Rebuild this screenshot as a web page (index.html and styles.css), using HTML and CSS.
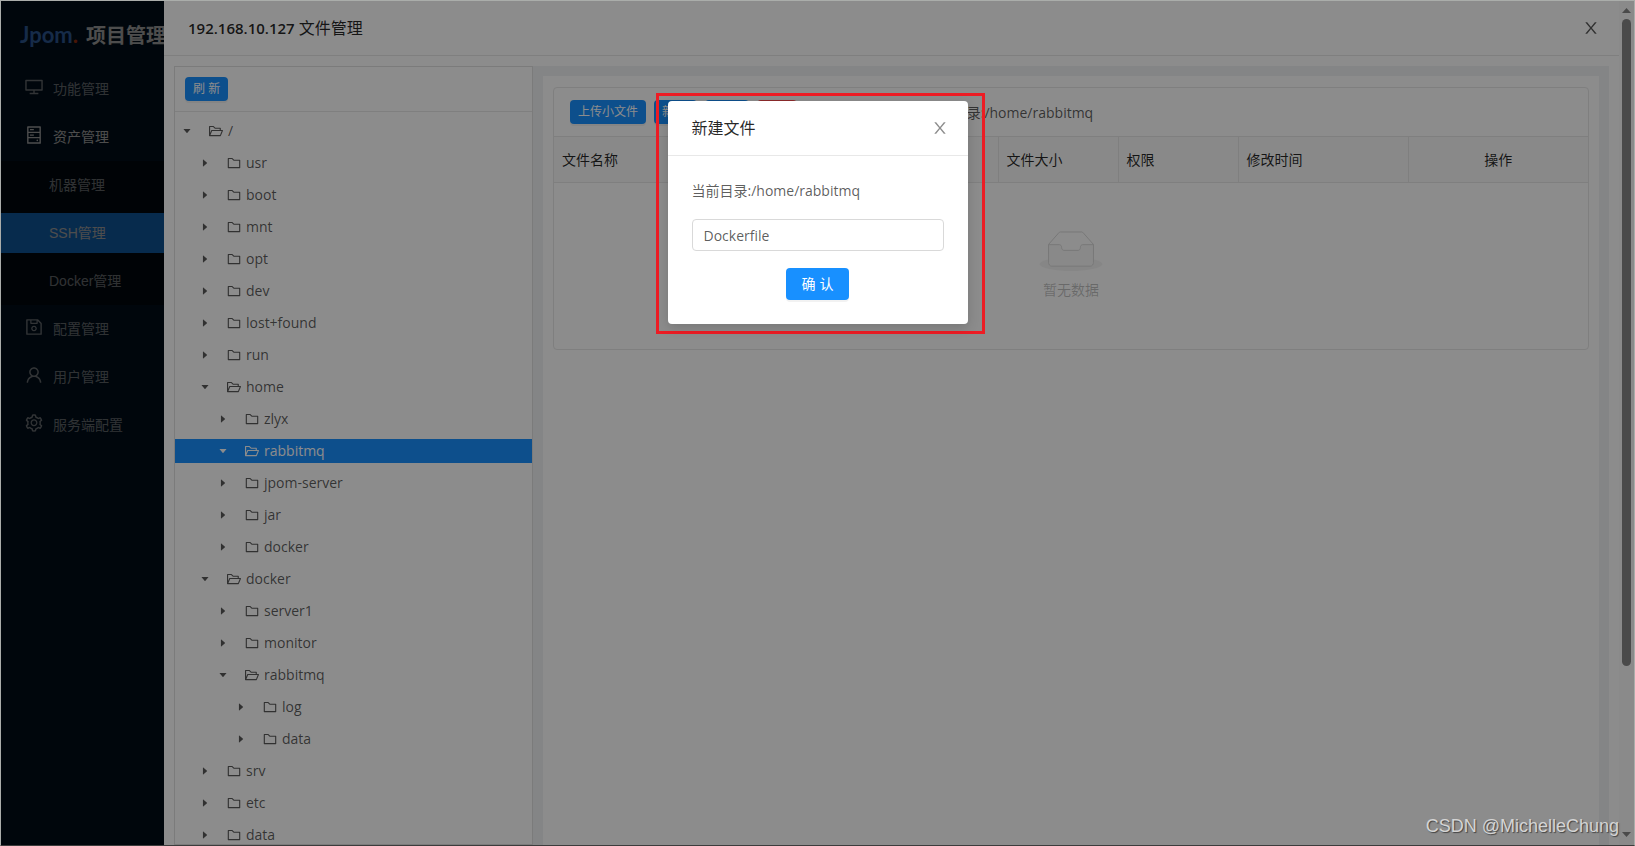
FILE: index.html
```html
<!DOCTYPE html>
<html lang="zh-CN">
<head>
<meta charset="utf-8">
<title>192.168.10.127 文件管理</title>
<link rel="stylesheet" href="styles.css">
</head>
<body>
<svg class="defs" aria-hidden="true">
  <symbol id="close" viewBox="0 0 1024 1024"><path d="M563.8 512l262.5-312.9c4.4-5.2.7-13.1-6.1-13.1h-79.8c-4.7 0-9.2 2.1-12.3 5.7L511.6 449.8 295.1 191.7c-3-3.6-7.5-5.7-12.3-5.7H203c-6.8 0-10.5 7.9-6.1 13.1L459.4 512 196.9 824.9A7.95 7.95 0 0 0 203 838h79.8c4.7 0 9.2-2.1 12.3-5.7l216.5-258.1 216.5 258.1c3 3.6 7.5 5.7 12.3 5.7h79.8c6.8 0 10.5-7.9 6.1-13.1L563.8 512z"/></symbol>
  <symbol id="folder" viewBox="0 0 1024 1024"><path d="M880 298.4H521L403.7 186.2a8.15 8.15 0 0 0-5.5-2.2H144c-17.7 0-32 14.3-32 32v592c0 17.7 14.3 32 32 32h736c17.7 0 32-14.3 32-32V330.4c0-17.7-14.3-32-32-32zM840 768H184V256h188.5l119.6 114.4H840V768z"/></symbol>
  <symbol id="open" viewBox="0 0 1024 1024"><path d="M928 444H820V330.4c0-17.7-14.3-32-32-32H473L355.7 186.2a8.15 8.15 0 0 0-5.5-2.2H96c-17.7 0-32 14.3-32 32v592c0 17.7 14.3 32 32 32h698c13 0 24.8-7.9 29.7-20l134-332c1.5-3.8 2.3-7.9 2.3-12 0-17.7-14.3-32-32-32zM136 256h188.5l119.6 114.4H748V444H238c-13 0-24.8 7.9-29.7 20L136 643.2V256zm635.3 512H159l103.3-256h612.4L771.3 768z"/></symbol>
  <symbol id="down" viewBox="0 0 1024 1024"><path d="M840.4 300H183.6c-19.7 0-30.7 20.8-18.5 35l328.4 380.8c9.4 10.9 27.5 10.9 37 0L858.9 335c12.2-14.2 1.2-35-18.5-35z"/></symbol>
  <symbol id="right" viewBox="0 0 1024 1024"><path d="M300 183.600v656.800c0 19.700 20.800 30.700 35 18.500l380.800-328.400c10.900-9.400 10.900-27.500 0-37L335 165.100c-14.200-12.200-35-1.200-35 18.500z"/></symbol>
  <symbol id="desktop" viewBox="0 0 1024 1024"><path d="M928 140H96c-17.7 0-32 14.3-32 32v496c0 17.7 14.3 32 32 32h380v112H304c-8.8 0-16 7.2-16 16v48c0 4.4 3.6 8 8 8h432c4.4 0 8-3.6 8-8v-48c0-8.8-7.2-16-16-16H548V700h380c17.7 0 32-14.3 32-32V172c0-17.7-14.3-32-32-32zm-40 488H136V212h752v416z"/></symbol>
  <symbol id="hdd" viewBox="0 0 1024 1024"><path d="M832 64H192c-17.7 0-32 14.3-32 32v832c0 17.7 14.3 32 32 32h640c17.7 0 32-14.3 32-32V96c0-17.7-14.3-32-32-32zm-600 72h560v208H232V136zm560 480H232V408h560v208zm0 272H232V680h560v208zM496 208H312c-4.4 0-8 3.6-8 8v48c0 4.4 3.6 8 8 8h184c4.4 0 8-3.6 8-8v-48c0-4.4-3.6-8-8-8zM312 544h184c4.4 0 8-3.6 8-8v-48c0-4.4-3.6-8-8-8H312c-4.4 0-8 3.6-8 8v48c0 4.4 3.6 8 8 8zm328 244a40 40 0 1 0 80 0 40 40 0 1 0-80 0z"/></symbol>
  <symbol id="save" viewBox="0 0 1024 1024"><path d="M893.3 293.3L730.7 130.7c-7.5-7.5-16.7-13-26.7-16V112H144c-17.7 0-32 14.3-32 32v736c0 17.7 14.3 32 32 32h736c17.7 0 32-14.3 32-32V338.5c0-17-6.7-33.2-18.7-45.2zM384 184h256v104H384V184zm456 656H184V184h136v136c0 17.7 14.3 32 32 32h320c17.7 0 32-14.3 32-32V205.8l136 136V840zM512 442c-79.5 0-144 64.5-144 144s64.5 144 144 144 144-64.5 144-144-64.5-144-144-144zm0 224c-44.2 0-80-35.8-80-80s35.8-80 80-80 80 35.8 80 80-35.8 80-80 80z"/></symbol>
  <symbol id="user" viewBox="0 0 1024 1024"><path d="M858.5 763.6a374 374 0 0 0-80.6-119.5 375.63 375.63 0 0 0-119.5-80.6c-.4-.2-.8-.3-1.2-.5C719.5 518 760 444.7 760 362c0-137-111-248-248-248S264 225 264 362c0 82.7 40.5 156 102.8 201.1-.4.2-.8.3-1.2.5-44.8 18.9-85 46-119.5 80.6a375.63 375.63 0 0 0-80.6 119.5A371.7 371.7 0 0 0 136 901.8a8 8 0 0 0 8 8.2h60c4.400 0 7.900-3.500 8-7.800 2-77.200 33-149.500 87.800-204.300 56.700-56.700 132-87.900 212.200-87.900s155.500 31.200 212.200 87.900C779 752.700 810 825 812 902.200c.1 4.400 3.600 7.800 8 7.800h60a8 8 0 0 0 8-8.200c-1-47.800-10.900-94.300-29.500-138.200zM512 534c-45.900 0-89.100-17.900-121.600-50.400S340 407.900 340 362c0-45.900 17.900-89.100 50.400-121.600S466.100 190 512 190s89.100 17.900 121.600 50.400S684 316.100 684 362c0 45.900-17.900 89.100-50.400 121.600S557.900 534 512 534z"/></symbol>
  <symbol id="setting" viewBox="0 0 1024 1024"><path d="M924.8 625.7l-65.5-56c3.1-19 4.7-38.4 4.7-57.8s-1.6-38.8-4.7-57.8l65.5-56a32.03 32.03 0 0 0 9.3-35.2l-.9-2.6a443.74 443.74 0 0 0-79.7-137.9l-1.8-2.1a32.12 32.12 0 0 0-35.1-9.5l-81.3 28.9c-30-24.6-63.5-44-99.7-57.6l-15.7-85a32.05 32.05 0 0 0-25.8-25.7l-2.7-.5c-52.1-9.4-106.9-9.4-159 0l-2.7.5a32.05 32.05 0 0 0-25.8 25.7l-15.8 85.4a351.86 351.86 0 0 0-99 57.4l-81.9-29.1a32 32 0 0 0-35.1 9.5l-1.8 2.1a446.02 446.02 0 0 0-79.7 137.9l-.9 2.6c-4.5 12.5-.8 26.5 9.3 35.2l66.3 56.6c-3.1 18.8-4.6 38-4.6 57.1 0 19.2 1.5 38.4 4.6 57.1L99 625.5a32.03 32.03 0 0 0-9.3 35.2l.9 2.6c18.1 50.4 44.9 96.9 79.7 137.9l1.8 2.1a32.12 32.12 0 0 0 35.1 9.5l81.9-29.1c29.8 24.5 63.1 43.9 99 57.4l15.8 85.4a32.05 32.05 0 0 0 25.8 25.7l2.7.5a449.4 449.4 0 0 0 159 0l2.7-.5a32.05 32.05 0 0 0 25.8-25.7l15.7-85a350 350 0 0 0 99.7-57.6l81.3 28.9a32 32 0 0 0 35.1-9.5l1.8-2.1c34.8-41.1 61.6-87.5 79.7-137.9l.9-2.6c4.5-12.3.8-26.3-9.3-35zM788.3 465.9c2.5 15.1 3.8 30.6 3.8 46.1s-1.3 31-3.8 46.1l-6.6 40.1 74.7 63.9a370.03 370.03 0 0 1-42.6 73.6L721 702.8l-31.4 25.8c-23.9 19.6-50.5 35-79.3 45.8l-38.1 14.3-17.9 97a377.5 377.5 0 0 1-85 0l-17.9-97.2-37.8-14.5c-28.500-10.800-55-26.200-78.700-45.700l-31.400-25.900-93.400 33.200c-17-22.900-31.200-47.600-42.600-73.600l75.500-64.500-6.500-40c-2.400-14.900-3.700-30.300-3.700-45.500 0-15.300 1.200-30.600 3.700-45.500l6.500-40-75.500-64.500c11.300-26.100 25.600-50.700 42.600-73.600l93.400 33.200 31.400-25.900c23.700-19.500 50.200-34.900 78.700-45.700l37.900-14.300 17.900-97.200c28.100-3.200 56.800-3.200 85 0l17.900 97 38.100 14.300c28.700 10.800 55.400 26.200 79.300 45.800l31.400 25.800 92.800-32.900c17 22.900 31.200 47.600 42.600 73.600L781.800 426l6.500 39.900zM512 326c-97.200 0-176 78.800-176 176s78.800 176 176 176 176-78.800 176-176-78.800-176-176-176zm79.200 255.200A111.600 111.600 0 0 1 512 614c-29.900 0-58-11.700-79.200-32.800A111.600 111.600 0 0 1 400 502c0-29.900 11.700-58 32.800-79.200C454 401.600 482.100 390 512 390c29.900 0 58 11.600 79.200 32.800A111.600 111.600 0 0 1 624 502c0 29.900-11.700 58-32.800 79.200z"/></symbol>
</svg>

<div class="app">
  <aside class="sider">
    <div class="brand"><span class="logo">Jpom<span class="logo-dot">.</span></span><span class="brand-name">项目管理</span></div>
    <nav class="menu">
      <a class="menu-item" href="#"><svg class="menu-icon"><use href="#desktop"/></svg>功能管理</a>
      <a class="menu-item current" href="#"><svg class="menu-icon"><use href="#hdd"/></svg>资产管理</a>
      <div class="submenu">
        <a class="sub-item" href="#">机器管理</a>
        <a class="sub-item active" href="#">SSH管理</a>
        <a class="sub-item" href="#">Docker管理</a>
      </div>
      <a class="menu-item" href="#"><svg class="menu-icon"><use href="#save"/></svg>配置管理</a>
      <a class="menu-item" href="#"><svg class="menu-icon"><use href="#user"/></svg>用户管理</a>
      <a class="menu-item" href="#"><svg class="menu-icon"><use href="#setting"/></svg>服务端配置</a>
    </nav>
  </aside>

  <section class="drawer">
    <div class="drawer-main">
      <header class="drawer-head">
        <h1 class="drawer-title"><span class="host">192.168.10.127</span> 文件管理</h1>
        <button class="icon-btn" aria-label="关闭"><svg class="close-icon"><use href="#close"/></svg></button>
      </header>
      <div class="drawer-body">
        <div class="tree-card">
          <div class="tree-head"><button class="btn small">刷 新</button></div>
          <ul class="tree">
            <li class="node l0"><svg class="caret"><use href="#down"/></svg><svg class="folder"><use href="#open"/></svg>/</li>
            <li class="node l1"><svg class="caret"><use href="#right"/></svg><svg class="folder"><use href="#folder"/></svg>usr</li>
            <li class="node l1"><svg class="caret"><use href="#right"/></svg><svg class="folder"><use href="#folder"/></svg>boot</li>
            <li class="node l1"><svg class="caret"><use href="#right"/></svg><svg class="folder"><use href="#folder"/></svg>mnt</li>
            <li class="node l1"><svg class="caret"><use href="#right"/></svg><svg class="folder"><use href="#folder"/></svg>opt</li>
            <li class="node l1"><svg class="caret"><use href="#right"/></svg><svg class="folder"><use href="#folder"/></svg>dev</li>
            <li class="node l1"><svg class="caret"><use href="#right"/></svg><svg class="folder"><use href="#folder"/></svg>lost+found</li>
            <li class="node l1"><svg class="caret"><use href="#right"/></svg><svg class="folder"><use href="#folder"/></svg>run</li>
            <li class="node l1"><svg class="caret"><use href="#down"/></svg><svg class="folder"><use href="#open"/></svg>home</li>
            <li class="node l2"><svg class="caret"><use href="#right"/></svg><svg class="folder"><use href="#folder"/></svg>zlyx</li>
            <li class="node l2 selected"><svg class="caret"><use href="#down"/></svg><svg class="folder"><use href="#open"/></svg>rabbitmq</li>
            <li class="node l2"><svg class="caret"><use href="#right"/></svg><svg class="folder"><use href="#folder"/></svg>jpom-server</li>
            <li class="node l2"><svg class="caret"><use href="#right"/></svg><svg class="folder"><use href="#folder"/></svg>jar</li>
            <li class="node l2"><svg class="caret"><use href="#right"/></svg><svg class="folder"><use href="#folder"/></svg>docker</li>
            <li class="node l1"><svg class="caret"><use href="#down"/></svg><svg class="folder"><use href="#open"/></svg>docker</li>
            <li class="node l2"><svg class="caret"><use href="#right"/></svg><svg class="folder"><use href="#folder"/></svg>server1</li>
            <li class="node l2"><svg class="caret"><use href="#right"/></svg><svg class="folder"><use href="#folder"/></svg>monitor</li>
            <li class="node l2"><svg class="caret"><use href="#down"/></svg><svg class="folder"><use href="#open"/></svg>rabbitmq</li>
            <li class="node l3"><svg class="caret"><use href="#right"/></svg><svg class="folder"><use href="#folder"/></svg>log</li>
            <li class="node l3"><svg class="caret"><use href="#right"/></svg><svg class="folder"><use href="#folder"/></svg>data</li>
            <li class="node l1"><svg class="caret"><use href="#right"/></svg><svg class="folder"><use href="#folder"/></svg>srv</li>
            <li class="node l1"><svg class="caret"><use href="#right"/></svg><svg class="folder"><use href="#folder"/></svg>etc</li>
            <li class="node l1"><svg class="caret"><use href="#right"/></svg><svg class="folder"><use href="#folder"/></svg>data</li>
          </ul>
        </div>
        <div class="content">
          <div class="content-inner">
            <div class="table-card">
              <div class="toolbar">
                <button class="btn small">上传小文件</button>
                <button class="btn small">新 建</button>
                <button class="btn small">刷 新</button>
                <button class="btn small danger">删除</button>
                <span class="toolbar-path">当前目录:/home/rabbitmq</span>
              </div>
              <table class="files">
                <colgroup><col><col class="c-size"><col class="c-size"><col class="c-time"><col class="c-ops"></colgroup>
                <thead><tr><th>文件名称</th><th>文件大小</th><th>权限</th><th>修改时间</th><th class="center">操作</th></tr></thead>
                <tbody><tr><td class="empty" colspan="5">
                  <svg class="empty-art" viewBox="0 0 64 41"><g transform="translate(0 1)" fill="none"><ellipse fill="#f5f5f5" cx="32" cy="33" rx="32" ry="7"/><g stroke="#d9d9d9"><path d="M55 12.76L44.854 1.258C44.367.474 43.656 0 42.907 0H21.093c-.749 0-1.46.474-1.947 1.257L9 12.761V22h46v-9.240z"/><path fill="#fafafa" d="M41.613 15.931c0-1.605.994-2.930 2.227-2.931H55v18.137C55 33.260 53.680 35 52.050 35h-40.100C10.320 35 9 33.259 9 31.137V13h11.160c1.233 0 2.227 1.323 2.227 2.928v.022c0 1.605 1.005 2.901 2.237 2.901h14.752c1.232 0 2.237-1.308 2.237-2.913v-.007z"/></g></g></svg>
                  <p class="empty-text">暂无数据</p>
                </td></tr></tbody>
              </table>
            </div>
          </div>
        </div>
      </div>
    </div>
    <div class="scrollbar" aria-hidden="true">
      <svg class="scroll-arrow" viewBox="0 0 9 6"><path d="M4.500 0L9 5H0z"/></svg>
      <div class="scroll-thumb"></div>
      <svg class="scroll-arrow last" viewBox="0 0 9 6"><path d="M0 0h9L4.500 5z"/></svg>
    </div>
  </section>

  <div class="mask"></div>
  <div class="highlight"></div>
  <div class="modal" role="dialog" aria-labelledby="modal-title">
    <header class="modal-head">
      <h2 class="modal-title" id="modal-title">新建文件</h2>
      <button class="icon-btn" aria-label="关闭"><svg class="close-icon"><use href="#close"/></svg></button>
    </header>
    <form class="modal-body">
      <label class="path-label" for="file-name">当前目录:/home/rabbitmq</label>
      <input class="text-input" id="file-name" type="text" value="Dockerfile">
      <button class="btn" type="button">确 认</button>
    </form>
  </div>
  <div class="watermark">CSDN @MichelleChung</div>
</div>
</body>
</html>
```
FILE: styles.css
```css
* {
  box-sizing: border-box;
}

body {
  margin: 0;
  font: 14px/22px "Open Sans", "Noto Sans CJK SC", sans-serif;
  color: rgba(0, 0, 0, 0.65);
}

h1,
h2,
p,
ul {
  margin: 0;
  padding: 0;
}

svg {
  fill: currentColor;
  flex: none;
}

.defs {
  display: none;
}

.app {
  position: relative;
  display: flex;
  height: 100vh;
  overflow: hidden;
  border: 1px solid #aaadaa;
  border-bottom-color: #3c3c3c;
}

/* Sidebar */
.sider {
  position: relative;
  width: 163px;
  flex: none;
  overflow: hidden;
  background: #001529;
  font-family: "Liberation Sans", "Noto Sans CJK SC", sans-serif;
}

.sider::after {
  content: "";
  position: absolute;
  inset: 0;
  background: rgba(0, 0, 0, 0.45);
}

.brand {
  display: flex;
  align-items: center;
  gap: 8px;
  height: 64px;
  padding: 4px 0 0 19px;
  white-space: nowrap;
}

.logo {
  font: bold 22px/32px "Lato", sans-serif;
  color: #4a90f0;
}

.logo-dot {
  color: #f04a14;
}

.brand-name {
  padding-top: 2px;
  font-size: 20px;
  font-weight: bold;
  color: #fff;
}

.menu {
  display: flex;
  flex-direction: column;
}

.menu-item,
.sub-item {
  display: flex;
  align-items: center;
  height: 40px;
  margin: 4px 0;
  color: rgba(255, 255, 255, 0.65);
  text-decoration: none;
  white-space: nowrap;
}

.menu-item {
  gap: 9px;
  padding-left: 23px;
}

.menu-icon {
  width: 20px;
  height: 20px;
  margin-bottom: 4px;
}

.current {
  color: #fff;
}

.submenu {
  display: flex;
  flex-direction: column;
  background: #000c17;
}

.sub-item {
  padding-left: 48px;
}

.active {
  background: #1890ff;
  color: #fff;
}

/* Drawer */
.drawer {
  display: flex;
  flex: 1;
  min-width: 0;
  background: #fff;
}

.drawer-main {
  display: flex;
  flex: 1;
  flex-direction: column;
  min-width: 0;
}

.drawer-head {
  display: flex;
  align-items: center;
  justify-content: space-between;
  flex: none;
  height: 55px;
  padding: 0 19px 0 24px;
  border-bottom: 1px solid #e8e8e8;
}

.drawer-title,
.modal-title {
  font-size: 16px;
  font-weight: 400;
  color: rgba(0, 0, 0, 0.85);
}

.host {
  font-size: 15px;
  font-weight: 600;
}

.icon-btn {
  display: flex;
  padding: 0;
  border: 0;
  background: none;
  color: rgba(0, 0, 0, 0.45);
}

.drawer .icon-btn {
  color: rgba(0, 0, 0, 0.65);
}

.close-icon {
  width: 18px;
  height: 18px;
}

.drawer-body {
  display: flex;
  flex: 1;
  min-height: 0;
  padding: 10px 10px 0;
}

.tree-card {
  flex: none;
  width: 359px;
  border: 1px solid #e0e0e0;
}

.tree-head {
  display: flex;
  align-items: center;
  height: 45px;
  padding: 0 10px;
  border-bottom: 1px solid #e8e8e8;
}

.btn {
  height: 32px;
  padding: 0 16px;
  border: 0;
  border-radius: 4px;
  background: #1890ff;
  box-shadow: 0 2px 0 rgba(0, 0, 0, 0.05);
  color: #fff;
  font: 400 14px/22px "Liberation Sans", "Noto Sans CJK SC", sans-serif;
}

.small {
  height: 24px;
  padding: 0 8px;
  font-size: 12px;
}

.danger {
  background: #ff4d4f;
}

.tree {
  padding-top: 3px;
  list-style: none;
}

.node {
  display: flex;
  align-items: center;
  height: 24px;
  margin: 4px 0 8px;
}

.l0 { padding-left: 7px; }
.l1 { padding-left: 25px; }
.l2 { padding-left: 43px; }
.l3 { padding-left: 61px; }

.caret {
  width: 10px;
  height: 10px;
  margin-right: 16px;
}

.folder {
  width: 16px;
  height: 16px;
  margin-right: 4px;
}

.selected {
  background: #1890ff;
  color: #fff;
}

.content {
  flex: 1;
  min-width: 0;
  padding: 10px 10px 0;
  background: #f0f2f5;
}

.content-inner {
  height: 100%;
  padding: 11px 10px;
  background: #fff;
}

.table-card {
  border: 1px solid #e8e8e8;
  border-radius: 4px;
}

.toolbar {
  display: flex;
  align-items: center;
  gap: 8px;
  height: 48px;
  padding: 0 16px;
}

.toolbar-path {
  margin-left: 120px;
  padding-top: 2px;
}

.files {
  width: 100%;
  table-layout: fixed;
  border-collapse: collapse;
}

.c-size { width: 120px; }
.c-time { width: 170px; }
.c-ops { width: 180px; }

.files th {
  height: 46px;
  padding: 0 8px;
  border: solid #e8e8e8;
  border-width: 1px 1px 1px 0;
  background: #fafafa;
  color: rgba(0, 0, 0, 0.85);
  font-weight: 400;
  text-align: left;
}

.files th:last-child {
  border-right: 0;
}

.files .center {
  text-align: center;
}

.empty {
  padding: 48px 0;
  text-align: center;
}

.empty-art {
  display: block;
  width: 64px;
  height: 40px;
  margin: 0 auto 8px;
}

.empty-text {
  color: rgba(0, 0, 0, 0.25);
}

.scrollbar {
  display: flex;
  flex-direction: column;
  align-items: center;
  gap: 5px;
  width: 15px;
  padding: 7px 0;
  background: #fcfcfc;
}

.scroll-arrow {
  width: 9px;
  height: 6px;
  color: #888;
}

.last {
  margin-top: auto;
}

.scroll-thumb {
  width: 9px;
  height: 78%;
  border-radius: 5px;
  background: #888;
}

/* Dialog */
.mask {
  position: absolute;
  inset: 0;
  background: rgba(0, 0, 0, 0.45);
}

.highlight {
  position: absolute;
  top: 92px;
  left: 50%;
  width: 329px;
  height: 241px;
  margin-left: -162px;
  border: 3px solid #ed1c24;
}

.modal {
  position: absolute;
  top: 100px;
  left: 50%;
  width: 300px;
  margin-left: -150px;
  border-radius: 4px;
  background: #fff;
  box-shadow: 0 4px 12px rgba(0, 0, 0, 0.15);
}

.modal-head {
  display: flex;
  align-items: center;
  justify-content: space-between;
  height: 55px;
  padding: 0 19px 0 24px;
  border-bottom: 1px solid #e8e8e8;
}

.modal-body {
  display: flex;
  flex-direction: column;
  align-items: center;
  gap: 17px;
  padding: 24px;
}

.path-label {
  align-self: stretch;
}

.text-input {
  width: 100%;
  height: 32px;
  padding: 0 11px;
  border: 1px solid #d9d9d9;
  border-radius: 4px;
  font: inherit;
  color: inherit;
}

.watermark {
  position: absolute;
  right: 15px;
  bottom: 7px;
  color: #d4d4d4;
  font: 18px/24px "Liberation Sans", sans-serif;
  text-shadow: 1px 1px 1px #444;
}
```
